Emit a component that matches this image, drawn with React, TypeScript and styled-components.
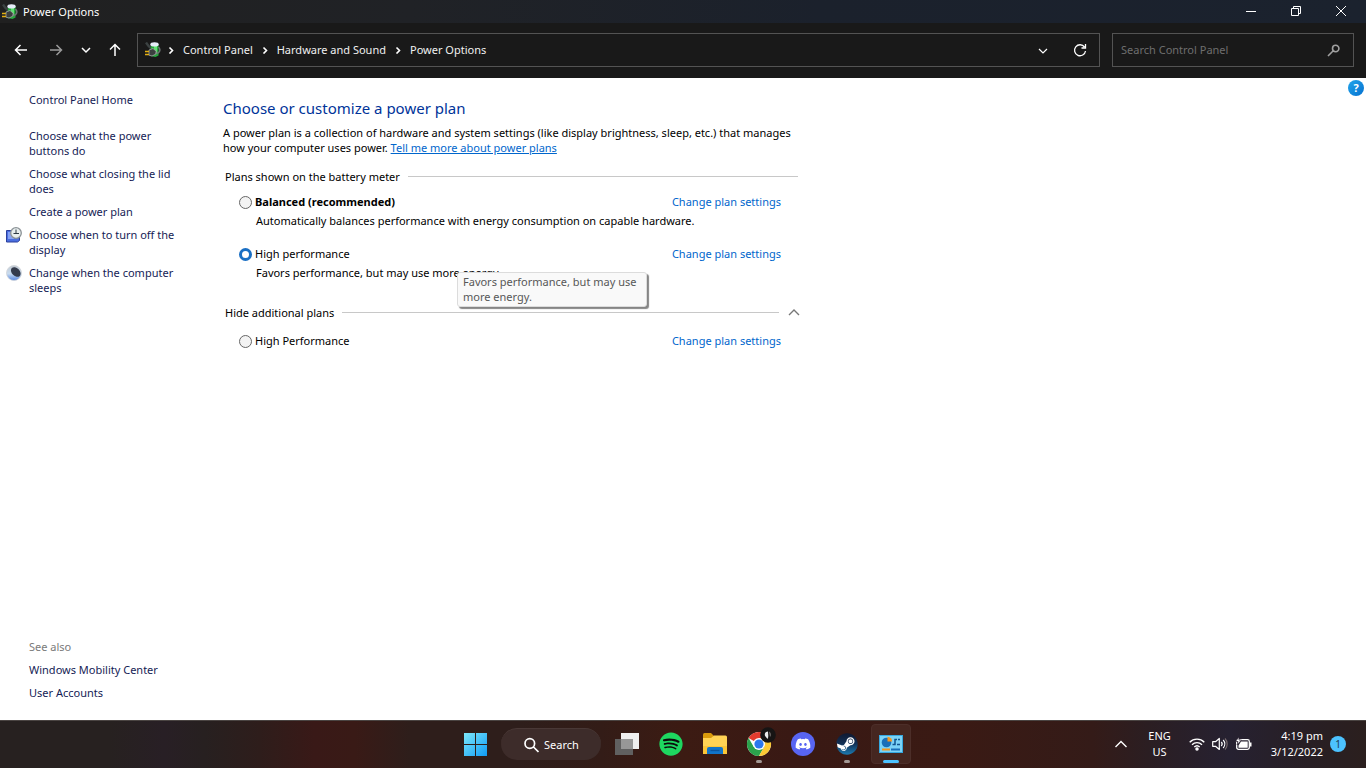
import React from "react";
import styled, { createGlobalStyle, css } from "styled-components";
import { FaSpotify, FaDiscord, FaSteam } from "react-icons/fa";

const GlobalStyle = createGlobalStyle`
  *, *::before, *::after { box-sizing: border-box; }
  body {
    margin: 0;
    background: #fff;
    color: #000;
    font: 11px/15px "Noto Sans", "Open Sans", sans-serif;
  }
  button, input { font: inherit; color: inherit; }
  p, h1, h2, ul { margin: 0; padding: 0; }
  ul { list-style: none; }
`;

const Window = styled.div`
  display: flex;
  flex-direction: column;
  min-height: 100vh;
`;

const TitleBar = styled.header`
  display: flex;
  align-items: center;
  height: 23px;
  padding: 0 3px 0 2px;
  background: linear-gradient(90deg, #202020 0%, #202226 30%, #1b212c 60%, #1b222e 100%);
  color: #fff;
`;

const WindowTitle = styled.span`
  flex: 1;
  padding-left: 5px;
`;

const CaptionButton = styled.button`
  display: grid;
  place-items: center;
  width: 45px;
  height: 23px;
  padding: 0;
  border: 0;
  background: none;
  color: #fff;
`;

const Toolbar = styled.div`
  display: flex;
  align-items: center;
  height: 55px;
  padding: 0 12px 1px 6px;
  background: #191919;
  color: #fff;
`;

const NavButton = styled.button<{ $width: number }>`
  display: grid;
  place-items: center;
  width: ${(p) => p.$width}px;
  height: 30px;
  padding: 0;
  border: 0;
  background: none;
  color: #fff;
  &:disabled { color: #9a9a9a; }
`;

const fieldBox = css`
  display: flex;
  align-items: center;
  height: 34px;
  border: 1px solid #535353;
`;

const AddressBar = styled.nav`
  ${fieldBox}
  flex: 1;
  margin: 0 12px 0 3px;
  padding-left: 7px;
`;

const Crumbs = styled.ul`
  display: flex;
  flex: 1;
  align-items: center;
  padding-bottom: 1px;
`;

const Crumb = styled.li`
  display: flex;
  align-items: center;
  svg { margin: 0 8px; }
  a { color: #f0f0f0; text-decoration: none; }
  &:first-child svg { margin: 0 8px 0 6px; }
`;

const SearchBox = styled.label`
  ${fieldBox}
  width: 242px;
  padding: 0 12px 0 8px;
  color: #a0a0a0;
  input {
    flex: 1;
    min-width: 0;
    padding: 0 0 2px;
    border: 0;
    outline: 0;
    background: none;
  }
  input::placeholder { color: #6e6e6e; opacity: 1; }
`;

const Body = styled.div`
  display: flex;
  flex: 1;
  align-items: stretch;
`;

const Sidebar = styled.aside`
  display: flex;
  flex-direction: column;
  justify-content: space-between;
  width: 223px;
  padding: 14px 0 20px 6px;
`;

const TaskList = styled.ul`
  display: flex;
  flex-direction: column;
  gap: 8px;
`;

const TaskItem = styled.li<{ $home?: boolean; $muted?: boolean }>`
  display: grid;
  grid-template-columns: 16px 160px;
  column-gap: 7px;
  margin-bottom: ${(p) => (p.$home ? 13 : 0)}px;
  color: ${(p) => (p.$muted ? "#7a7a7a" : "#151c55")};
  svg { grid-column: 1; }
  a, span { grid-column: 2; grid-row: 1; color: inherit; text-decoration: none; }
`;

const Content = styled.main`
  flex: 1;
  max-width: 580px;
  padding-top: 20px;
`;

const Heading = styled.h1`
  color: #003399;
  font-size: 15px;
  font-weight: 400;
  line-height: 20px;
`;

const Intro = styled.p`
  padding: 7px 0 14px;
  white-space: nowrap;
  a { color: #0066cc; }
`;

const Group = styled.section`
  max-width: 575px;
  padding-left: 2px;
  & + & { margin-top: 17px; }
`;

const GroupHeader = styled.div`
  display: flex;
  align-items: center;
  gap: 8px;
  h2 { font-size: 11px; font-weight: 400; }
`;

const Rule = styled.span`
  flex: 1;
  height: 1px;
  background: #c8c8c8;
`;

const CollapseButton = styled.button`
  display: grid;
  place-items: center;
  width: 12px;
  height: 15px;
  margin: 0 -2px 0 1px;
  padding: 0;
  border: 0;
  background: none;
  color: #777;
`;

const Plan = styled.div<{ $extra?: boolean }>`
  position: relative;
  padding: ${(p) => (p.$extra ? 13 : 10)}px 17px 0 14px;
`;

const PlanRow = styled.div`
  display: flex;
  justify-content: space-between;
  a { color: #0066cc; text-decoration: none; }
`;

const PlanLabel = styled.label<{ $bold?: boolean }>`
  display: flex;
  align-items: center;
  gap: 3px;
  font-weight: ${(p) => (p.$bold ? 700 : 400)};
`;

const Radio = styled.input`
  appearance: none;
  width: 13px;
  height: 13px;
  margin: 2px 0 0;
  border: 1px solid #666;
  border-radius: 50%;
  background: #f3f3f3;
  &:checked { border: 3px solid #1a6fc4; background: #fff; }
`;

const PlanNote = styled.p`
  padding: 4px 0 8px 17px;
`;

const Tooltip = styled.div`
  position: absolute;
  top: 36px;
  left: 232px;
  width: 190px;
  padding: 1px 5px 2px;
  border: 1px solid #dcdcdc;
  border-radius: 3px;
  background: #f9f9f9;
  box-shadow: 2px 2px 1px #858585;
  color: #575757;
`;

const HelpButton = styled.button`
  width: 16px;
  height: 16px;
  margin: 2px 2px 0 auto;
  padding: 0;
  border: 0;
  border-radius: 50%;
  background: linear-gradient(135deg, #22a5ea, #0571d0);
  color: #fff;
  font-weight: 700;
  line-height: 16px;
`;

const Taskbar = styled.footer`
  display: grid;
  grid-template-columns: 1fr auto 1fr;
  align-items: center;
  height: 48px;
  padding-bottom: 1px;
  border-top: 1px solid #4a4442;
  background: linear-gradient(90deg, #272120 0%, #272120 8%, #281f25 12%, #272020 15%, #2e1d1b 19%, #391917 23%, #391a16 26%, #2e1e1b 30%, #2e1e1b 38%, #331c17 44%, #3c1b13 50%, #391914 58%, #3a1a14 70%, #341b18 80%, #2b1e22 84%, #262131 90%, #281f24 96%, #2b1f1e 100%);
  color: #fff;
`;

const Apps = styled.div`
  display: flex;
  grid-column: 2;
  align-items: center;
  gap: 4px;
`;

const AppButton = styled.button<{ $state?: "running" | "active" }>`
  position: relative;
  display: grid;
  place-items: center;
  width: 40px;
  height: 40px;
  padding: 0;
  border: 1px solid ${(p) => (p.$state === "active" ? "#4c2e29" : "transparent")};
  border-radius: 4px;
  background: ${(p) => (p.$state === "active" ? "#452620" : "none")};
  &::after {
    content: "";
    position: absolute;
    bottom: 0;
    display: ${(p) => (p.$state ? "block" : "none")};
    width: ${(p) => (p.$state === "active" ? 16 : 6)}px;
    height: 3px;
    border-radius: 2px;
    background: ${(p) => (p.$state === "active" ? "#4cc2ff" : "#a39894")};
  }
`;

const SearchPill = styled.button`
  display: flex;
  align-items: center;
  justify-content: center;
  gap: 5px;
  width: 100px;
  height: 32px;
  margin: 0 2px;
  padding: 0;
  border: 0;
  border-top: 1px solid #493836;
  border-radius: 16px;
  background: #3d2c2a;
`;

const Disc = styled.span<{ $color: string }>`
  display: grid;
  place-items: center;
  width: 24px;
  height: 24px;
  border-radius: 50%;
  background: ${(p) => p.$color};
`;

const Tray = styled.div`
  display: flex;
  align-items: center;
  justify-content: flex-end;
  padding-right: 20px;
`;

const TrayButton = styled.button<{ $gap: number; $end?: boolean }>`
  display: flex;
  align-items: center;
  gap: 7px;
  margin-right: ${(p) => p.$gap}px;
  padding: 0;
  border: 0;
  background: none;
  line-height: 16px;
  text-align: ${(p) => (p.$end ? "right" : "center")};
`;

const Badge = styled.span`
  width: 16px;
  height: 16px;
  border-radius: 50%;
  background: #4cc2ff;
  color: #1c3b50;
  font-size: 10px;
  line-height: 16px;
  text-align: center;
`;

const PowerIcon = () => (
  <svg width="16" height="16" viewBox="0 0 16 16" aria-hidden="true">
    <path d="M1 0.5l2.5 3.5L7 7" stroke="#3c4242" strokeWidth="2.4" fill="none" />
    <path d="M6 2h7.500v11.500l-3 1.500-5-1z" fill="#27a63d" />
    <path d="M9 4h3v7l-3 1z" fill="#5fe070" />
    <ellipse cx="9.500" cy="2.400" rx="4.200" ry="2.100" fill="#e6ebf8" />
    <path d="M13.500 5c2.500 2.500 1.500 7.500-4 6" stroke="#6f7775" strokeWidth="1.500" fill="none" />
    <path d="M4 8l4-1.500 3.200 2.700-.5 3L7 14l-3-.8z" fill="#3b3f3f" stroke="#a3a9a7" strokeWidth=".8" />
    <path d="M0 9.500h4M0 12.500h4" stroke="#e3ae12" strokeWidth="1.300" />
  </svg>
);

type StrokeProps = { d: string; size?: number; width?: number };
const Stroke = ({ d, size = 16, width = 1 }: StrokeProps) => (
  <svg width={size} height={size} viewBox={`0 0 ${size} ${size}`} fill="none" stroke="currentColor" strokeWidth={width} aria-hidden="true">
    <path d={d} />
  </svg>
);

const crumbArrow = <Stroke size={8} width={1.6} d="M2.500 1.500l3 3-3 3" />;

const DisplayIcon = () => (
  <svg width="16" height="16" viewBox="0 0 16 16" aria-hidden="true">
    <path d="M.5 3.500h13v10l-2 1.500H.5z" fill="#4a6ee0" stroke="#2b3f9c" />
    <path d="M2 5h6v7H2z" fill="#86a2f5" />
    <circle cx="10" cy="6" r="5.300" fill="#e8eeee" stroke="#8b9296" strokeWidth="1.300" />
    <path d="M10 2.500v4h3M7.500 6.500H10" stroke="#2d3a45" fill="none" />
  </svg>
);

const MoonIcon = () => (
  <svg width="16" height="16" viewBox="0 0 16 16" aria-hidden="true">
    <defs>
      <linearGradient id="moon" x1="0" y1="0" x2="0" y2="1">
        <stop offset="0" stopColor="#c2cad2" />
        <stop offset=".55" stopColor="#c9dcf0" />
        <stop offset="1" stopColor="#5585e0" />
      </linearGradient>
    </defs>
    <circle cx="8" cy="8" r="7.500" fill="url(#moon)" stroke="#cfd3d8" strokeWidth=".8" />
    <ellipse cx="9.800" cy="7" rx="5.600" ry="3.900" transform="rotate(45 9.800 7)" fill="#343b4c" />
  </svg>
);

const StartIcon = () => (
  <svg width="24" height="24" viewBox="0 0 24 24" aria-hidden="true">
    <defs>
      <linearGradient id="start" x1="0" y1="0" x2="1" y2="1">
        <stop offset="0" stopColor="#7de8fb" />
        <stop offset="1" stopColor="#0f9bf5" />
      </linearGradient>
    </defs>
    <path d="M1 1h11v11H1zM13 1h11v11H13zM1 13h11v11H1zM13 13h11v11H13z" fill="url(#start)" />
  </svg>
);

const TaskViewIcon = () => (
  <svg width="24" height="24" viewBox="0 0 24 24" aria-hidden="true">
    <path d="M6 1h18v16H6z" fill="#efefef" />
    <path d="M0 7h18v16H0z" fill="#606060" />
    <path d="M6 7h12v10H6z" fill="#979797" />
  </svg>
);

const FolderIcon = () => (
  <svg width="24" height="24" viewBox="0 0 24 24" aria-hidden="true">
    <path d="M0 2.500Q0 1 1.500 1h6.500l2.500 2.500V8H0z" fill="#d99a0c" />
    <path d="M0 6h8l3-2.500h11.500Q24 3.500 24 5v17H0z" fill="#ffd355" />
    <path d="M0 14h24v8H0z" fill="#fbc638" />
    <path d="M4 22v-5q0-2 2-2h12q2 0 2 2v5z" fill="#1174c9" />
    <path d="M7.500 18.500h9" stroke="#0a559f" strokeWidth="1.300" />
  </svg>
);

const ChromeIcon = () => (
  <svg width="34" height="34" viewBox="0 0 34 34" aria-hidden="true">
    <circle cx="17" cy="17" r="12" fill="#fff" />
    <path d="M17 17L6.600 11A12 12 0 0 1 27.400 11H17z" fill="#e33b2e" />
    <path d="M6.600 11A12 12 0 0 0 17 29l5.200-9L17 17l-5.200 3z" fill="#2ba24c" />
    <path d="M27.400 11A12 12 0 0 1 17 29l5.200-9L17 11z" fill="#fcc934" />
    <circle cx="17" cy="17" r="6" fill="#fff" />
    <circle cx="17" cy="17" r="4.600" fill="#2c78ee" />
    <circle cx="26" cy="8" r="7.800" fill="#161414" />
    <path d="M26 4.500c-3 0-4 3-2.500 5l2 2.500c1.500-2 .5-5 .5-7.500z" fill="#ececec" />
    <path d="M27 4.500c2 1 2.500 4 1 5.500z" fill="#77706e" />
  </svg>
);

const SteamIcon = () => (
  <svg width="22" height="22" viewBox="0 0 22 22" aria-hidden="true">
    <linearGradient id="steam" gradientUnits="userSpaceOnUse" x1="0" y1="0" x2="0" y2="496">
      <stop offset="0" stopColor="#10182f" />
      <stop offset=".5" stopColor="#123055" />
      <stop offset="1" stopColor="#1b78ad" />
    </linearGradient>
    <circle cx="11" cy="11" r="10" fill="#fff" />
    <FaSteam size={22} fill="url(#steam)" />
  </svg>
);

const PanelIcon = () => (
  <svg width="24" height="20" viewBox="0 0 24 20" aria-hidden="true">
    <rect x=".5" y="1.500" width="23" height="17" fill="#7bd3f7" stroke="#35a8e0" />
    <circle cx="7.500" cy="8.500" r="4.800" fill="#1a6fb8" />
    <path d="M8.500 7.500V2.700a4.800 4.800 0 0 1 4.700 4.800z" fill="#f5961d" />
    <path d="M13.500 10.500h2.500v-5h2M19 5.500h2M18 10.500h3" stroke="#12568f" fill="none" strokeWidth="1.500" />
    <path d="M3 15.500h8" stroke="#f5961d" strokeWidth="2" />
    <path d="M12 15.500h9" stroke="#1a6fb8" strokeWidth="2" />
  </svg>
);

const WifiIcon = () => (
  <svg width="16" height="14" viewBox="0 0 16 14" fill="none" stroke="#fff" strokeWidth="1.300" aria-hidden="true">
    <path d="M.7 5.200a10.300 10.300 0 0 1 14.600 0M3 7.700a7 7 0 0 1 10 0M5.300 10a3.900 3.900 0 0 1 5.400 0" />
    <circle cx="8" cy="12" r="1.100" fill="#fff" />
  </svg>
);

const VolumeIcon = () => (
  <svg width="16" height="16" viewBox="0 0 16 16" fill="none" stroke="#fff" strokeWidth="1.200" aria-hidden="true">
    <path d="M.7 5.700h2.800L7.300 2.500v11L3.500 10.300H.7z" strokeLinejoin="round" />
    <path d="M9.300 6a3 3 0 0 1 0 4M11.200 4a6 6 0 0 1 0 8" />
    <path d="M13 2.500a8 8 0 0 1 0 11" stroke="#75686b" />
  </svg>
);

const BatteryIcon = () => (
  <svg width="17" height="14" viewBox="0 0 17 14" aria-hidden="true">
    <rect x="1.700" y="2.700" width="12.600" height="9.600" rx="1.800" fill="none" stroke="#fff" strokeWidth="1.300" />
    <path d="M3.500 10.700V8.500L6 4.500h6.700v6.200zM15 5.500h1.500v4H15z" fill="#fff" />
    <path d="M4 0L.5 4.500H3L2 8l4.500-5H4z" fill="#fff" stroke="#292030" strokeWidth=".7" />
  </svg>
);

type PlanOptionProps = {
  name: string;
  note?: string;
  bold?: boolean;
  checked?: boolean;
  extra?: boolean;
  tip?: React.ReactNode;
};
const PlanOption = ({ name, note, bold, checked, extra, tip }: PlanOptionProps) => (
  <Plan $extra={extra}>
    <PlanRow>
      <PlanLabel $bold={bold}>
        <Radio type="radio" name="plan" defaultChecked={checked} />
        {name}
      </PlanLabel>
      <a href="#settings">Change plan settings</a>
    </PlanRow>
    {note && <PlanNote>{note}</PlanNote>}
    {tip && <Tooltip role="tooltip">{tip}</Tooltip>}
  </Plan>
);

export default function App() {
  return (
    <>
      <GlobalStyle />
      <Window>
        <TitleBar>
          <PowerIcon />
          <WindowTitle>Power Options</WindowTitle>
          <CaptionButton aria-label="Minimize"><Stroke d="M3 7.500h10" /></CaptionButton>
          <CaptionButton aria-label="Restore"><Stroke d="M3.500 4.500h7v7h-7zM5.500 4.500v-2h7v7h-2" /></CaptionButton>
          <CaptionButton aria-label="Close"><Stroke d="M3 2l10 10M13 2L3 12" /></CaptionButton>
        </TitleBar>
        <Toolbar>
          <NavButton $width={30} aria-label="Back"><Stroke width={1.5} d="M14 8H2.500M7.500 3l-5 5 5 5" /></NavButton>
          <NavButton $width={40} disabled aria-label="Forward"><Stroke width={1.5} d="M2 8h11.500M8.500 3l5 5-5 5" /></NavButton>
          <NavButton $width={20} aria-label="Recent locations"><Stroke width={1.5} d="M4 6l4 4 4-4" /></NavButton>
          <NavButton $width={38} aria-label="Up"><Stroke width={1.5} d="M8 14V2.500M3 7.500l5-5 5 5" /></NavButton>
          <AddressBar aria-label="Address">
            <PowerIcon />
            <Crumbs>
              <Crumb>{crumbArrow}<a href="#panel">Control Panel</a></Crumb>
              <Crumb>{crumbArrow}<a href="#hardware">Hardware and Sound</a></Crumb>
              <Crumb>{crumbArrow}<a href="#power">Power Options</a></Crumb>
            </Crumbs>
            <NavButton $width={36} aria-label="Previous locations"><Stroke width={1.2} d="M4 7l4 4 4-4" /></NavButton>
            <NavButton $width={38} aria-label="Refresh">
              <Stroke width={1.3} d="M13.500 9A5.500 5.500 0 1 1 12.500 5M13.500 2v4H9.500" />
            </NavButton>
          </AddressBar>
          <SearchBox>
            <input type="search" placeholder="Search Control Panel" aria-label="Search Control Panel" />
            <Stroke width={1.6} d="M8 9L3 14M7.500 6.500a3.200 3.200 0 1 1 6.400 0a3.200 3.200 0 1 1-6.400 0" />
          </SearchBox>
        </Toolbar>
        <Body>
          <Sidebar>
            <TaskList>
              <TaskItem $home><a href="#home">Control Panel Home</a></TaskItem>
              <TaskItem><a href="#buttons">Choose what the power<br />buttons do</a></TaskItem>
              <TaskItem><a href="#lid">Choose what closing the lid<br />does</a></TaskItem>
              <TaskItem><a href="#create">Create a power plan</a></TaskItem>
              <TaskItem><DisplayIcon /><a href="#display">Choose when to turn off the<br />display</a></TaskItem>
              <TaskItem><MoonIcon /><a href="#sleep">Change when the computer<br />sleeps</a></TaskItem>
            </TaskList>
            <TaskList>
              <TaskItem $muted><span>See also</span></TaskItem>
              <TaskItem><a href="#mobility">Windows Mobility Center</a></TaskItem>
              <TaskItem><a href="#accounts">User Accounts</a></TaskItem>
            </TaskList>
          </Sidebar>
          <Content>
            <Heading>Choose or customize a power plan</Heading>
            <Intro>
              A power plan is a collection of hardware and system settings (like display brightness, sleep, etc.) that manages
              <br />
              how your computer uses power. <a href="#more">Tell me more about power plans</a>
            </Intro>
            <Group>
              <GroupHeader><h2>Plans shown on the battery meter</h2><Rule /></GroupHeader>
              <PlanOption bold name="Balanced (recommended)" note="Automatically balances performance with energy consumption on capable hardware." />
              <PlanOption
                checked
                name="High performance"
                note="Favors performance, but may use more energy."
                tip={<>Favors performance, but may use<br />more energy.</>}
              />
            </Group>
            <Group>
              <GroupHeader>
                <h2>Hide additional plans</h2>
                <Rule />
                <CollapseButton aria-label="Hide additional plans"><Stroke size={12} width={1.4} d="M1 8l5-5 5 5" /></CollapseButton>
              </GroupHeader>
              <PlanOption extra name="High Performance" />
            </Group>
          </Content>
          <HelpButton aria-label="Help">?</HelpButton>
        </Body>
        <Taskbar>
          <Apps>
            <AppButton aria-label="Start"><StartIcon /></AppButton>
            <SearchPill><Stroke width={1.7} d="M10.500 10l5 5M2 6.500a4.800 4.800 0 1 1 9.600 0a4.800 4.800 0 1 1-9.600 0" />Search</SearchPill>
            <AppButton aria-label="Task view"><TaskViewIcon /></AppButton>
            <AppButton aria-label="Spotify">
              <Disc $color="radial-gradient(circle, #0b0b0b 10px, transparent 11px)"><FaSpotify size={24} color="#1ed760" /></Disc>
            </AppButton>
            <AppButton aria-label="File Explorer"><FolderIcon /></AppButton>
            <AppButton aria-label="Chrome" $state="running"><ChromeIcon /></AppButton>
            <AppButton aria-label="Discord"><Disc $color="#5865f2"><FaDiscord size={16} color="#fff" /></Disc></AppButton>
            <AppButton aria-label="Steam" $state="running"><SteamIcon /></AppButton>
            <AppButton aria-label="Control Panel" $state="active"><PanelIcon /></AppButton>
          </Apps>
          <Tray>
            <TrayButton $gap={19} aria-label="Show hidden icons"><Stroke width={1.4} d="M2.500 11L8 5.500l5.500 5.500" /></TrayButton>
            <TrayButton $gap={18}>ENG<br />US</TrayButton>
            <TrayButton $gap={19} aria-label="Network, volume and battery"><WifiIcon /><VolumeIcon /><BatteryIcon /></TrayButton>
            <TrayButton $gap={7} $end>4:19 pm<br />3/12/2022</TrayButton>
            <Badge>1</Badge>
          </Tray>
        </Taskbar>
      </Window>
    </>
  );
}
